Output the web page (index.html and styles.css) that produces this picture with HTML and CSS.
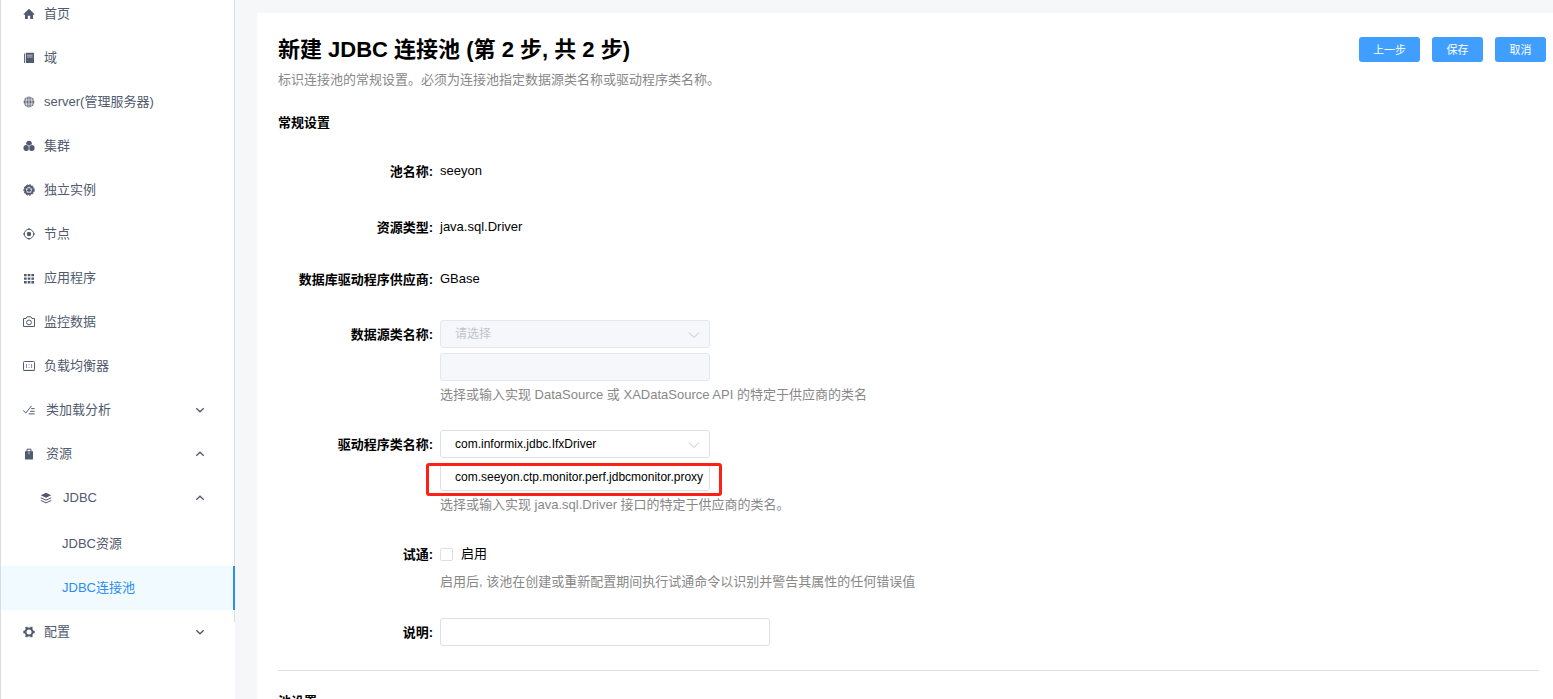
FILE: index.html
```
<!DOCTYPE html>
<html lang="zh-CN">
<head>
<meta charset="utf-8">
<title>新建 JDBC 连接池</title>
<link rel="stylesheet" href="styles.css">
</head>
<body>
<div class="app">
  <nav class="sidebar">
    <ul class="menu">
      <li><a class="item" href="#"><svg class="icon" viewBox="0 0 12 12"><path d="M6 0.8 11.6 6.2 10.8 7 10 6.3V11H7.2V7.8H4.8V11H2V6.3L1.2 7 .4 6.2Z"/></svg>首页</a></li>
      <li><a class="item" href="#"><svg class="icon" viewBox="0 0 12 12"><path d="M1 2 2 .9V11H1ZM2.6.7H11V11H2.6Z"/><path class="cut" d="M4 3.2H9.6M4 5H9.6M2.3 1V11"/></svg>域</a></li>
      <li><a class="item" href="#"><svg class="icon soft" viewBox="0 0 12 12"><circle cx="6" cy="6" r="5.4"/><path class="cut" d="M.5 4H11.5M.5 8H11.5M6 .6V11.4M4 1Q2 6 4 11M8 1Q10 6 8 11"/></svg>server(管理服务器)</a></li>
      <li><a class="item" href="#"><svg class="icon" viewBox="0 0 12 12"><circle cx="6" cy="3.6" r="2.8"/><circle cx="3.3" cy="8" r="2.9"/><circle cx="8.7" cy="8" r="2.9"/><path class="cut" d="M6 6V10M6 6 3.5 4.7M6 6 8.5 4.7"/></svg>集群</a></li>
      <li><a class="item" href="#"><svg class="icon" viewBox="0 0 12 12"><circle cx="6" cy="6" r="5"/><circle class="line dash" cx="6" cy="6" r="5.2"/><circle class="cut" cx="6" cy="6" r="2.6"/><path class="cut" d="M6 6V2.6M6 6 9.3 5M6 6 8 8.8M6 6 4 8.8M6 6 2.7 5"/><circle cx="6" cy="6" r="1.3"/></svg>独立实例</a></li>
      <li><a class="item" href="#"><svg class="icon" viewBox="0 0 12 12"><circle class="line" cx="6" cy="6" r="4.7"/><circle cx="6" cy="6" r="2.2"/><path class="line" d="M6 0V2M6 10V12M0 6H2M10 6H12"/></svg>节点</a></li>
      <li><a class="item" href="#"><svg class="icon" viewBox="0 0 12 12"><path d="M1 2H3.7V4.2H1ZM4.7 2H7.4V4.2H4.7ZM8.4 2H11V4.2H8.4ZM1 5.4H3.7V7.8H1ZM4.7 5.4H7.4V7.8H4.7ZM8.4 5.4H11V7.8H8.4ZM1 9H3.7V11.4H1ZM4.7 9H7.4V11.4H4.7ZM8.4 9H11V11.4H8.4Z"/></svg>应用程序</a></li>
      <li><a class="item" href="#"><svg class="icon" viewBox="0 0 12 12"><path class="line" d="M.5 2.5H3L4 .8H8L9 2.5H11.5V10.5H.5Z"/><circle class="line" cx="6" cy="6.4" r="2.4"/></svg>监控数据</a></li>
      <li><a class="item" href="#"><svg class="icon" viewBox="0 0 12 12"><rect class="line" x=".5" y="1.5" width="11" height="9" rx="1"/><path class="line" d="M.5 10.4H11.5"/><path class="line thin" d="M3.4 4V8M8.6 4V8M6 4.2V5.2M6 6.8V7.8"/></svg>负载均衡器</a></li>
      <li><button class="item wide" type="button"><svg class="icon" viewBox="0 0 12 12"><path class="line" d="M.2 6.5 2.8 9 8.5 1.8M8.2 4.6H11.6M7 7.3H11.6M5.6 9.9H11.8"/></svg>类加载分析<svg class="arrow" viewBox="0 0 10 10"><path d="M1.3 3.2 5 6.8 8.7 3.2"/></svg></button></li>
      <li>
        <button class="item wide" type="button"><svg class="icon" viewBox="0 0 12 12"><path d="M2 3.2H10V11.5H2Z"/><path class="line" d="M4 5V1.2H8V5"/><path class="cut" d="M6 3.5V6.5"/></svg>资源<svg class="arrow up" viewBox="0 0 10 10"><path d="M1.3 3.2 5 6.8 8.7 3.2"/></svg></button>
        <button class="item wide nested" type="button"><svg class="icon" viewBox="0 0 12 12"><path d="M6 .8 11.2 3.3 6 5.8 .8 3.3Z"/><path class="line" d="M.8 5.8 6 8.2 11.2 5.8M.8 8.4 6 10.9 11.2 8.4"/></svg>JDBC<svg class="arrow up" viewBox="0 0 10 10"><path d="M1.3 3.2 5 6.8 8.7 3.2"/></svg></button>
        <ul class="submenu">
          <li><a class="item leaf" href="#">JDBC资源</a></li>
          <li><a class="item leaf active" href="#" aria-current="page">JDBC连接池</a></li>
        </ul>
      </li>
      <li><button class="item" type="button"><svg class="icon" viewBox="0 0 12 12"><circle class="gear" cx="6" cy="6" r="3.5"/><path class="teeth" d="M0.3 6H2.4M9.6 6H11.7M3.1 1 4.2 3M8.9 1 7.8 3M3.1 11 4.2 9M8.9 11 7.8 9"/></svg>配置<svg class="arrow" viewBox="0 0 10 10"><path d="M1.3 3.2 5 6.8 8.7 3.2"/></svg></button></li>
    </ul>
  </nav>
  <main class="main">
    <form class="panel">
      <header class="header">
        <div>
          <h1>新建 JDBC 连接池 (第 2 步, 共 2 步)</h1>
          <p class="hint">标识连接池的常规设置。必须为连接池指定数据源类名称或驱动程序类名称。</p>
        </div>
        <div class="actions">
          <button class="btn" type="button">上一步</button>
          <button class="btn" type="button">保存</button>
          <button class="btn" type="button">取消</button>
        </div>
      </header>
      <section class="section">
        <h2>常规设置</h2>
        <div class="row spaced"><span class="label">池名称:</span><span class="value">seeyon</span></div>
        <div class="row tight"><span class="label">资源类型:</span><span class="value">java.sql.Driver</span></div>
        <div class="row"><span class="label">数据库驱动程序供应商:</span><span class="value">GBase</span></div>
        <div class="row">
          <label class="label" for="source">数据源类名称:</label>
          <div class="field">
            <div class="select"><select id="source" disabled><option>请选择</option></select><svg viewBox="0 0 12 12"><path d="M1 3.5 6 8.5 11 3.5"/></svg></div>
            <input class="text" type="text" aria-label="数据源类名称" disabled>
            <p class="hint">选择或输入实现 DataSource 或 XADataSource API 的特定于供应商的类名</p>
          </div>
        </div>
        <div class="row">
          <label class="label" for="driver">驱动程序类名称:</label>
          <div class="field">
            <div class="select"><select id="driver"><option>com.informix.jdbc.IfxDriver</option></select><svg viewBox="0 0 12 12"><path d="M1 3.5 6 8.5 11 3.5"/></svg></div>
            <div class="marked"><input class="text" type="text" aria-label="驱动程序类名称" value="com.seeyon.ctp.monitor.perf.jdbcmonitor.proxy"></div>
            <p class="hint">选择或输入实现 java.sql.Driver 接口的特定于供应商的类名。</p>
          </div>
        </div>
        <div class="row spaced">
          <span class="label">试通:</span>
          <div class="field">
            <label class="check"><input type="checkbox">启用</label>
            <p class="hint">启用后, 该池在创建或重新配置期间执行试通命令以识别并警告其属性的任何错误值</p>
          </div>
        </div>
        <div class="row tight"><label class="label" for="note">说明:</label><input class="text long" id="note" type="text"></div>
      </section>
      <section class="section divided">
        <h2>池设置</h2>
      </section>
    </form>
  </main>
</div>
</body>
</html>
```
FILE: styles.css
```
* { box-sizing: border-box; }
body {
  margin: 0;
  font: 13px/20px "Liberation Sans", "Noto Sans CJK SC", sans-serif;
  color: #000;
  background: #f5f7f9;
}
h1, h2, p, ul { margin: 0; padding: 0; }
ul { list-style: none; }
button, input, select { font: inherit; color: inherit; }

.app { display: flex; height: 100vh; overflow: hidden; }

.sidebar {
  flex: 0 0 235px;
  background: #fff;
  border-left: 1px solid #d7dde4;
}
.menu { position: relative; margin-top: -8px; }
.menu::after {
  content: "";
  position: absolute;
  top: 0;
  right: 0;
  bottom: 32px;
  width: 1px;
  background: #dcdee2;
}
.item {
  display: flex;
  align-items: center;
  gap: 9px;
  width: 100%;
  height: 44px;
  padding: 0 30px 0 22px;
  border: 0;
  background: none;
  color: #515a6e;
  text-decoration: none;
  white-space: nowrap;
}
.wide { gap: 11px; }
.nested { padding-left: 39px; }
.leaf { padding-left: 61px; }
.submenu { padding-top: 2px; }
.active {
  position: relative;
  z-index: 1;
  color: #2d8cf0;
  background: #f0faff;
  border-right: 2px solid #2d8cf0;
}
.icon { flex: none; width: 12px; height: 12px; fill: #515a6e; }
.soft { opacity: 0.85; }
.icon .line { fill: none; stroke: #515a6e; }
.icon .thin { stroke-width: 0.7; }
.icon .dash { stroke-dasharray: 2 1; }
.icon .cut { fill: none; stroke: #fff; stroke-width: 0.6; }
.icon .gear { fill: none; stroke: #515a6e; stroke-width: 2; }
.icon .teeth { stroke: #515a6e; stroke-width: 2.4; }
.arrow { width: 10px; height: 10px; margin-left: auto; fill: none; stroke: #515a6e; stroke-width: 1.3; }
.up { transform: rotate(180deg); }

.main { flex: 1; min-width: 0; padding: 13px 0 0 22px; }
.panel { min-height: 100%; padding: 22px 7px 0 21px; background: #fff; }
.header { display: flex; justify-content: space-between; }
h1 { font-size: 22px; line-height: 30px; }
.header .hint { margin-top: 5px; }
.hint { color: #888; }
.actions { display: flex; align-items: flex-start; gap: 12px; padding-top: 2px; }
.btn {
  min-width: 51px;
  height: 25px;
  padding: 0 14px;
  border: 0;
  border-radius: 3px;
  background: #409eff;
  color: #fff;
  font-size: 11px;
}

.section { margin: 23px 7px 0 0; }
h2 { font-size: 13px; line-height: 20px; margin-bottom: 24px; }
.row {
  display: grid;
  grid-template-columns: 155px 1fr;
  column-gap: 7px;
  margin-bottom: 25px;
}
.spaced { margin-bottom: 26px; }
.tight { margin-bottom: 22px; }
.label { line-height: 30px; font-weight: bold; text-align: right; }
.value { line-height: 28px; }
.field .hint { margin-top: 4px; }
.select { position: relative; width: 270px; margin-bottom: 5px; }
.select svg {
  position: absolute;
  top: 9px;
  right: 10px;
  width: 12px;
  height: 12px;
  fill: none;
  stroke: #c0c4cc;
  pointer-events: none;
}
select, .text {
  display: block;
  width: 270px;
  height: 28px;
  padding: 0 5px 0 14px;
  border: 1px solid #dcdfe6;
  border-radius: 3px;
  background: #fff;
  font-size: 12px;
  appearance: none;
}
.text.long { width: 330px; }
select:disabled, .text:disabled {
  background: #f5f7fa;
  border-color: #e4e7ed;
  color: #c0c4cc;
  opacity: 1;
}
.marked { position: relative; width: 270px; }
.marked::after {
  content: "";
  position: absolute;
  inset: 0 -12px -5px -14px;
  border: 3px solid #fc2015;
  border-radius: 3px;
  pointer-events: none;
}
.check { display: flex; align-items: center; gap: 8px; width: max-content; height: 28px; }
.check input {
  width: 13px;
  height: 13px;
  margin: 0;
  border: 1px solid #dcdfe6;
  border-radius: 2px;
  background: #fff;
  appearance: none;
}
.section.divided { margin-top: 0; padding-top: 21px; border-top: 1px solid #dcdfe6; }
```
